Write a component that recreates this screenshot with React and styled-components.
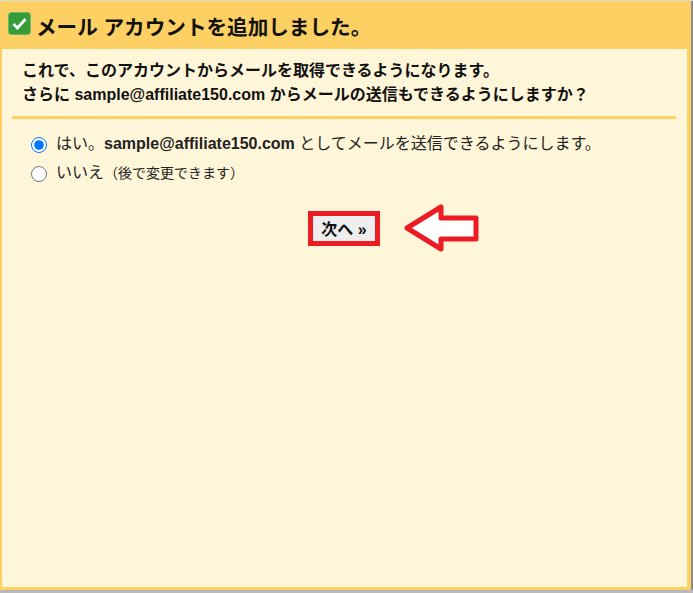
import React from 'react'
import styled, { createGlobalStyle } from 'styled-components'

const GlobalStyle = createGlobalStyle`
  html, body {
    margin: 0;
    padding: 0;
    height: 593px;
    overflow: hidden;
    background: #fff;
  }
  body {
    font-family: "Liberation Sans", "Noto Sans CJK JP", sans-serif;
    color: #111;
  }
`

const Screen = styled.div`
  width: 693px;
  height: 593px;
  box-sizing: border-box;
  padding: 1px 2px 3px 0;
  background: linear-gradient(#d9d9d9, #d9d9d9) top / 100% 1px no-repeat,
    linear-gradient(#b9b9b9, #b9b9b9) bottom / 100% 3px no-repeat,
    linear-gradient(#8a8a8a, #8a8a8a) right / 2px 100% no-repeat,
    #fff;
`

const Dialog = styled.div`
  height: 100%;
  box-sizing: border-box;
  display: flex;
  flex-direction: column;
  border: solid #fcd062;
  border-width: 0 4px 3px 2px;
  background: #fff6d9;
`

const Header = styled.div`
  height: 48px;
  flex: none;
  margin: 0 -4px 0 -2px;
  padding: 11px 0 0 8px;
  box-sizing: border-box;
  display: flex;
  align-items: flex-start;
  gap: 5px;
  background: #fcd062;
`

const CheckIcon = styled.svg`
  width: 23px;
  height: 23px;
  flex: none;
`

const Title = styled.h1`
  margin: 3px 0 0;
  font-size: 20.6px;
  line-height: 26px;
  font-weight: 700;
  color: #111;
`

const Intro = styled.p`
  margin: 0;
  padding: 10px 0 0 20px;
  font-size: 16px;
  line-height: 24px;
  font-weight: 700;
`

const Divider = styled.hr`
  margin: 9px 11px 0 10px;
  height: 3px;
  border: 0;
  background: #fcd062;
`

const Options = styled.div`
  padding: 10px 0 0 29px;
  display: flex;
  flex-direction: column;
  gap: 4px;
`

const Option = styled.label`
  display: flex;
  align-items: center;
  gap: 9px;
  height: 25px;
  font-size: 16px;
  color: #222;
`

const Radio = styled.input`
  width: 16px;
  height: 16px;
  margin: 7px 0 0;
  flex: none;
`

const Note = styled.span`
  font-size: 14px;
`

const Actions = styled.div`
  margin-top: 20px;
  display: flex;
  justify-content: center;
  align-items: center;
  gap: 24px;
  padding-left: 99px;
`

const NextButton = styled.button`
  width: 72px;
  height: 35px;
  box-sizing: border-box;
  border: 5px solid #ed1c24;
  background: #eeeeee;
  padding: 0;
  font: 700 16px "Liberation Sans", "Noto Sans CJK JP", sans-serif;
  color: #111;
`

const Arrow = styled.svg`
  width: 76px;
  height: 50px;
  flex: none;
`

export default function App() {
  return (
    <>
      <GlobalStyle />
      <Screen>
        <Dialog>
          <Header>
            <CheckIcon viewBox="0 0 23 23">
              <rect x="0.5" y="0.5" width="22" height="22" rx="3" fill="#359c38" stroke="#6db56d" />
              <path d="M5.5 12l4 4L17.5 7" fill="none" stroke="#fff" strokeWidth="2.8" />
            </CheckIcon>
            <Title>メール アカウントを追加しました。</Title>
          </Header>
          <Intro>
            これで、このアカウントからメールを取得できるようになります。
            <br />
            さらに sample@affiliate150.com からメールの送信もできるようにしますか？
          </Intro>
          <Divider />
          <Options>
            <Option>
              <Radio type="radio" name="send" defaultChecked />
              <span>
                はい。<b>sample@affiliate150.com</b> としてメールを送信できるようにします。
              </span>
            </Option>
            <Option>
              <Radio type="radio" name="send" />
              <span>
                いいえ<Note>（後で変更できます）</Note>
              </span>
            </Option>
          </Options>
          <Actions>
            <NextButton type="button">次へ »</NextButton>
            <Arrow viewBox="0 0 76 50">
              <path
                d="M3 25L37 4V15H72V36H37V46Z"
                fill="#fff"
                stroke="#ed1c24"
                strokeWidth="5"
                strokeLinejoin="round"
              />
            </Arrow>
          </Actions>
        </Dialog>
      </Screen>
    </>
  )
}
